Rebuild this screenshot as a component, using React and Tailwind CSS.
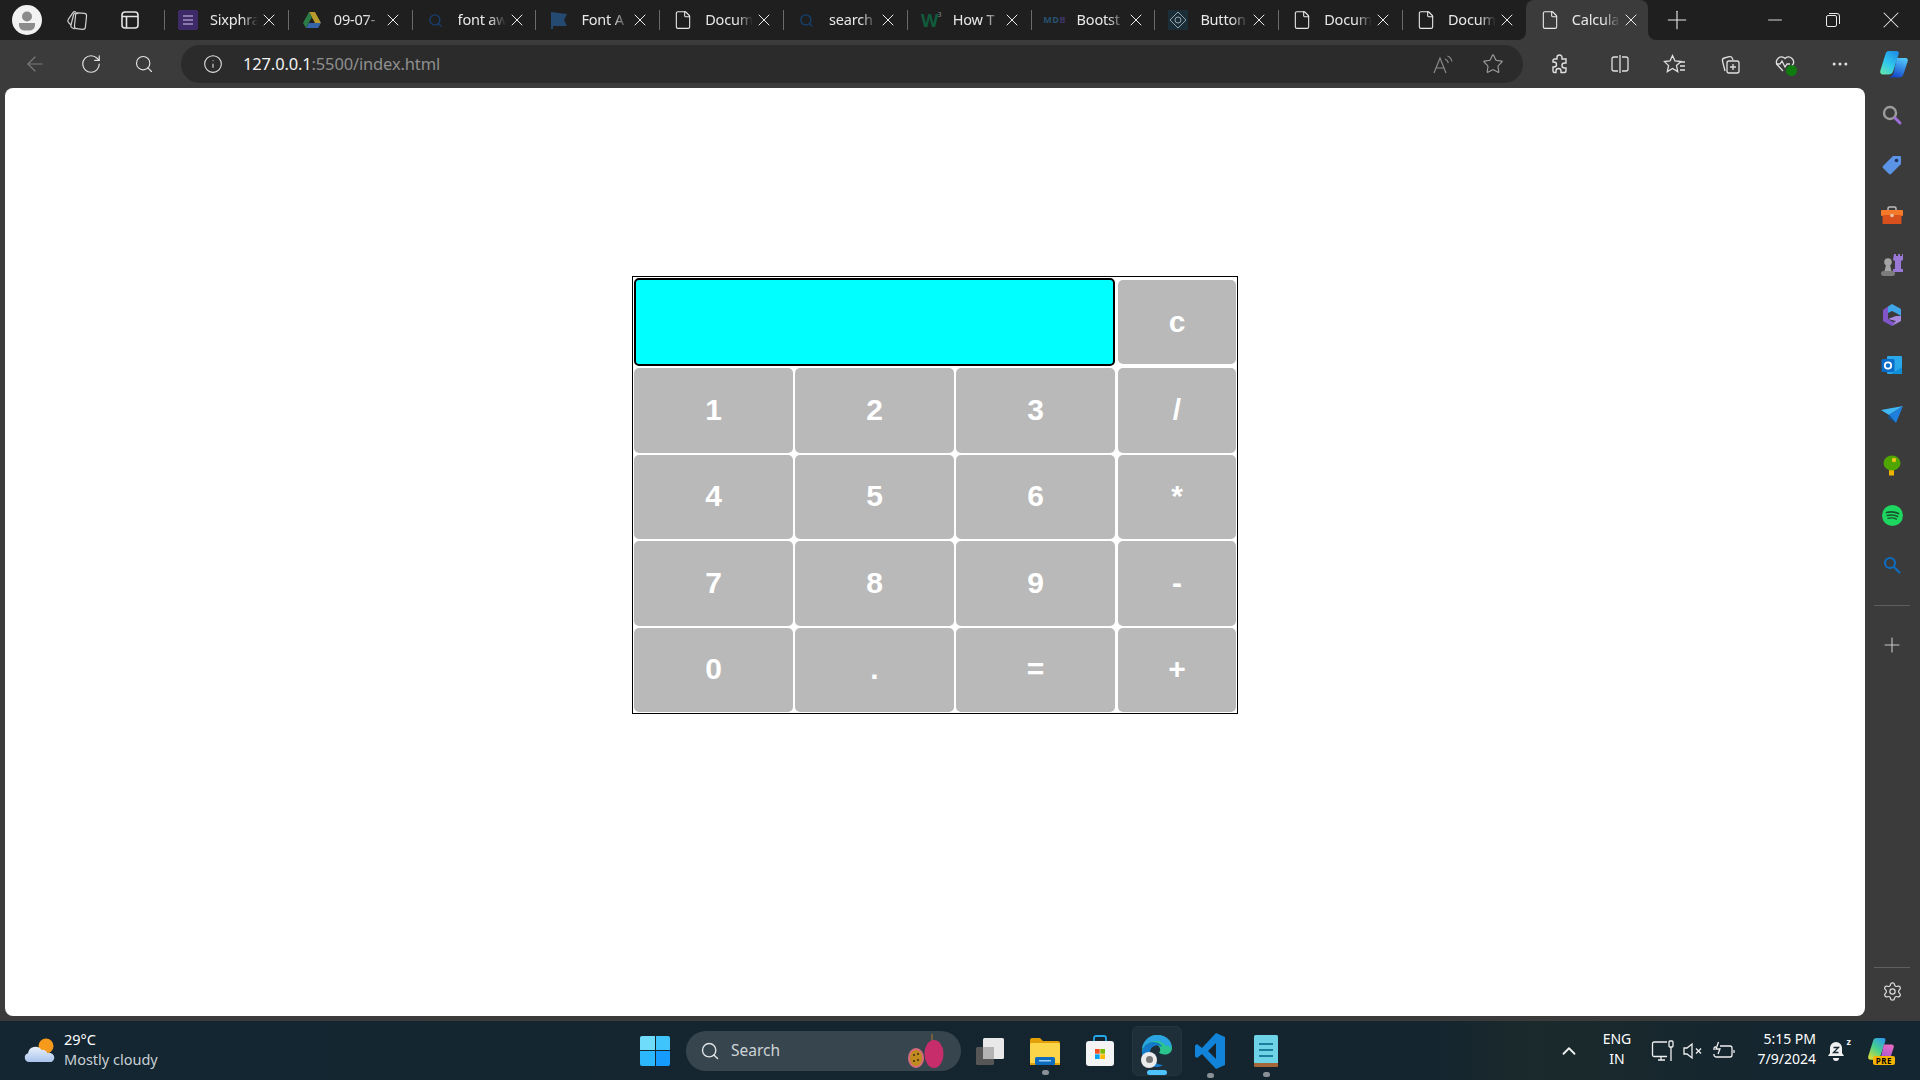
import React from "react";
import {
  ArrowLeft,
  ChevronUp,
  File,
  Info,
  Minus,
  MoreHorizontal,
  Plus,
  RotateCw,
  Search,
  Settings,
  Star,
  X,
} from "lucide-react";

const uiFont = { fontFamily: '"Noto Sans", "Open Sans", sans-serif' };

/* ---------- small drawn icons ---------- */

const Avatar = () => (
  <svg width="32" height="32" viewBox="0 0 32 32">
    <circle cx="16" cy="16" r="15" fill="#f2f2f2" />
    <circle cx="16" cy="12.5" r="5" fill="#8b8b8b" />
    <path d="M8 19h16v2.5a6 6 0 0 1-6 5h-4a6 6 0 0 1-6-5z" fill="#8b8b8b" />
  </svg>
);

const Workspaces = () => (
  <svg width="24" height="24" viewBox="0 0 24 24" fill="none" stroke="#cfcfcf" strokeWidth="1.2">
    <rect x="10" y="5" width="11" height="16" rx="2.5" transform="rotate(6 15 13)" />
    <path d="M10 21 7.500 20a2.500 2.500 0 0 1-1.500-3l2.500-10a2.500 2.500 0 0 1 3-1.800l2 .5" />
    <path d="M6 17 3.500 14.500a2.500 2.500 0 0 1-.2-3.200l4.500-6.500a2.500 2.500 0 0 1 3.200-.8" />
  </svg>
);

const VerticalTabs = () => (
  <svg width="20" height="20" viewBox="0 0 20 20" fill="none" stroke="#e4e4e4" strokeWidth="1.6">
    <rect x="2" y="2" width="16" height="16" rx="3" />
    <path d="M2 6.500h16M6.500 6.500V18" />
  </svg>
);

const FormsIcon = () => (
  <span className="flex h-5 w-5 flex-col items-center justify-center gap-[2px] rounded-[2px] bg-[#3f2a68]">
    <span className="h-[2px] w-[10px] bg-[#8a78ac]" />
    <span className="h-[2px] w-[10px] bg-[#8a78ac]" />
    <span className="h-[2px] w-[10px] bg-[#8a78ac]" />
  </span>
);

const DriveIcon = () => (
  <svg width="20" height="20" viewBox="0 0 20 20">
    <path d="M7 2h6l6 11h-6z" fill="#b99a2c" />
    <path d="M7 2 1 13l3 5 6-11z" fill="#2c7a46" />
    <path d="M4 18h12l3-5H7z" fill="#3565a8" />
  </svg>
);

const SearchFav = () => <Search size={15} strokeWidth={2.2} color="#17406e" />;

const FlagIcon = () => (
  <svg width="18" height="20" viewBox="0 0 18 20">
    <path d="M1 2l16 2-3 6 3 6H3v3H1z" fill="#254a72" />
  </svg>
);

const W3Icon = () => (
  <span className="flex items-start text-[18px] leading-none font-bold tracking-[-1px] text-[#0f5c3c]">
    W<span className="text-[7px] font-normal text-[#8a8a8a]">3</span>
  </span>
);

const MdbIcon = () => (
  <span className="text-[9px] font-bold tracking-[0.5px] text-[#27526e]">
    MD<span className="text-[#3e3668]">B</span>
  </span>
);

const DuIcon = () => (
  <span className="flex h-5 w-5 items-center justify-center bg-[#1b2d36]">
    <svg width="20" height="20" viewBox="0 0 20 20" fill="none" stroke="#9fb0b8" strokeWidth="0.9">
      <path d="M10 2 18 10 10 18 2 10z" />
      <circle cx="10" cy="10" r="3" />
    </svg>
  </span>
);

const PageIcon = () => <File size={20} strokeWidth={1.3} color="#eaeaea" />;

const ReadAloud = () => (
  <svg width="22" height="22" viewBox="0 0 22 22" fill="none" stroke="#8a8a8a" strokeWidth="1.2">
    <path d="M2 20 8 5l6 15M4.500 15h7" />
    <path d="M13 6c2 .8 3 2.200 3.400 4M15.500 3c2.600 1 4 3 4.400 5.500" />
  </svg>
);

const Extensions = () => (
  <svg width="22" height="22" viewBox="0 0 22 22" fill="none" stroke="#e0e0e0" strokeWidth="1.4">
    <path d="M8 4.500a2.500 2.500 0 0 1 5 0V6h4v4h-1.500a2.500 2.500 0 0 0 0 5H17v3a1.500 1.500 0 0 1-1.500 1.500H12V18a2.500 2.500 0 0 0-5 0v1.500H5.500A1.500 1.500 0 0 1 4 18v-4h1a2.500 2.500 0 0 0 0-5H4V7.500A1.500 1.500 0 0 1 5.500 6H8z" />
  </svg>
);

const SplitScreen = () => (
  <svg width="22" height="22" viewBox="0 0 22 22" fill="none" stroke="#e0e0e0" strokeWidth="1.3">
    <path d="M9 4H5a2 2 0 0 0-2 2v10a2 2 0 0 0 2 2h4M13 4h4a2 2 0 0 1 2 2v10a2 2 0 0 1-2 2h-4M11 2v18" />
  </svg>
);

const Favorites = () => (
  <svg width="24" height="22" viewBox="0 0 24 22" fill="none" stroke="#e0e0e0" strokeWidth="1.3">
    <path d="M9.500 2.500 12 8l6 .6-4.500 4 1.300 6L9.500 15.500 4.300 18.600l1.300-6L1.500 8.600 7 8z" />
    <path d="M17 9h5M17 13h5M17 17h5" />
  </svg>
);

const Collections = () => (
  <svg width="24" height="24" viewBox="0 0 24 24" fill="none" stroke="#e0e0e0" strokeWidth="1.3">
    <path d="M7 19 4.500 9a2.500 2.500 0 0 1 1.800-3l5-1.300a2.500 2.500 0 0 1 3 1.600L15 8" />
    <rect x="9" y="9" width="12" height="12" rx="2" />
    <path d="M15 12v6M12 15h6" />
  </svg>
);

const HeartPulse = () => (
  <span className="relative flex h-6 w-6 items-center justify-center">
    <svg width="22" height="22" viewBox="0 0 22 22" fill="none" stroke="#e0e0e0" strokeWidth="1.3">
      <path d="M9 18 3.500 12a5 5 0 0 1 7-7l.5.500.5-.500a5 5 0 0 1 7 7l-1 1" />
      <path d="M2 11h4l2-3 3 6 2-3h3" />
    </svg>
    <span className="absolute right-0 bottom-0 h-[11px] w-[11px] rounded-full bg-[#107c10]" />
  </span>
);

const CopilotIcon = ({ size = 30 }) => (
  <svg width={size} height={size} viewBox="0 0 30 30">
    <defs>
      <linearGradient id="copA" x1="0.800" y1="0" x2="0.200" y2="1">
        <stop offset="0" stopColor="#1f8fe8" />
        <stop offset="0.550" stopColor="#30c8ee" />
        <stop offset="1" stopColor="#5fe3b0" />
      </linearGradient>
      <linearGradient id="copB" x1="0.700" y1="0" x2="0.300" y2="1">
        <stop offset="0" stopColor="#52c6fa" />
        <stop offset="1" stopColor="#1243c8" />
      </linearGradient>
    </defs>
    <path d="M10 2h7.500c2 0 2.800 1.500 2.200 3.200L14 22.500c-.7 2-2.300 3-4.500 3H4c-2.300 0-3.300-1.800-2.700-3.700L6.500 5c.6-2 1.700-3 3.500-3z" fill="url(#copA)" />
    <path d="M18 9h8.500c2 0 2.700 1.500 2.200 3.200l-4.300 13.300c-.7 2-2 3-4.200 3H8.500c2.800 0 5-1.200 6-4z" fill="url(#copB)" />
  </svg>
);

// taskbar copilot: same shape, preview colours
const CopilotPre = () => (
  <svg width="28" height="26" viewBox="0 0 30 28">
    <defs>
      <linearGradient id="preA" x1="0.800" y1="0" x2="0.200" y2="1">
        <stop offset="0" stopColor="#2f9be8" />
        <stop offset="0.500" stopColor="#46d08c" />
        <stop offset="1" stopColor="#d8dc3c" />
      </linearGradient>
      <linearGradient id="preB" x1="0.700" y1="0" x2="0.300" y2="1">
        <stop offset="0" stopColor="#e86ac0" />
        <stop offset="1" stopColor="#8a4fd8" />
      </linearGradient>
    </defs>
    <path d="M10 1h7.500c2 0 2.800 1.500 2.200 3.200L14 21.500c-.7 2-2.300 3-4.500 3H4c-2.300 0-3.300-1.800-2.700-3.700L6.500 4c.6-2 1.700-3 3.500-3z" fill="url(#preA)" />
    <path d="M18 8h8.500c2 0 2.700 1.500 2.200 3.200l-4.300 13.300c-.7 2-2 3-4.200 3H8.500c2.800 0 5-1.200 6-4z" fill="url(#preB)" />
  </svg>
);

const Tag = () => (
  <svg width="22" height="22" viewBox="0 0 22 22">
    <path d="M12 2h7a1 1 0 0 1 1 1v7L10 20a1.500 1.500 0 0 1-2 0L2 14a1.500 1.500 0 0 1 0-2z" fill="#5b93e6" />
    <circle cx="15.500" cy="6.500" r="1.800" fill="#20325a" />
  </svg>
);

const Toolbox = () => (
  <svg width="22" height="20" viewBox="0 0 22 20">
    <path d="M7 6V3.500A1.500 1.500 0 0 1 8.500 2h5A1.500 1.500 0 0 1 15 3.500V6" fill="none" stroke="#bdbdbd" strokeWidth="1.500" />
    <rect x="0" y="5" width="22" height="6" rx="1" fill="#f47a2a" />
    <rect x="1.500" y="10" width="19" height="9" rx="1" fill="#d8501c" />
    <circle cx="11" cy="10.500" r="1.800" fill="#e6c3a8" />
  </svg>
);

const Chess = () => (
  <svg width="24" height="24" viewBox="0 0 24 24">
    <path d="M14 1h2v2h2V1h2v2h2V1h1v6l-2 1v8h2v3H13v-3h2V8l-2-1z" fill="#9a78d6" />
    <circle cx="8" cy="9" r="3.800" fill="#a3a3a3" />
    <path d="M6 12h4l1.500 6h-7z" fill="#a3a3a3" />
    <rect x="1" y="18" width="14" height="5" rx="2.500" fill="#7c7c7c" />
  </svg>
);

const M365 = () => (
  <svg width="22" height="24" viewBox="0 0 22 24">
    <path d="M11 1 20 6v7l-5-3-4-2-4 2V3.500z" fill="#3fa5e6" />
    <path d="M2 7 7 3.500V16l5 3 3-1-4 5-9-5z" fill="#7f55c9" />
    <path d="M20 13v5l-9 5 4-5-8-2 8-3z" fill="#a98ae0" />
  </svg>
);

const Outlook = () => (
  <svg width="22" height="22" viewBox="0 0 22 22">
    <rect x="6" y="2" width="15" height="18" rx="1" fill="#28a8ea" />
    <rect x="0.500" y="5" width="13" height="13" rx="1.500" fill="#0a6cc9" />
    <circle cx="7" cy="11.500" r="3.200" fill="none" stroke="#fff" strokeWidth="1.800" />
    <path d="M10 20 21 13v7z" fill="#0f8fd8" />
  </svg>
);

const Send = () => (
  <svg width="22" height="18" viewBox="0 0 22 18">
    <path d="M0 4 22 0 8 9z" fill="#3fb9f5" />
    <path d="M22 0 15 17 8 9z" fill="#1f7fdc" />
    <path d="M8 9 15 17l-8-5z" fill="#14508e" />
  </svg>
);

const Tree = () => (
  <svg width="18" height="22" viewBox="0 0 18 22">
    <rect x="6" y="15" width="5" height="6.500" fill="#f2b200" />
    <ellipse cx="9" cy="9" rx="8.500" ry="7.500" fill="#4fa600" />
    <circle cx="11" cy="6" r="2.200" fill="#f0c419" />
  </svg>
);

const Spotify = () => (
  <svg width="21" height="21" viewBox="0 0 21 21" fill="none" stroke="#17532d" strokeLinecap="round">
    <circle cx="10.500" cy="10.500" r="10.500" fill="#1ed760" stroke="none" />
    <path d="M4.500 7.500c4-1 8.500-.8 12 1" strokeWidth="1.800" />
    <path d="M5.200 10.500c3.500-.8 7.500-.6 10.500 1" strokeWidth="1.500" />
    <path d="M6 13.300c3-.6 6-.5 8.500.8" strokeWidth="1.300" />
  </svg>
);

const SearchColor = () => (
  <svg width="22" height="22" viewBox="0 0 22 22" fill="none" strokeWidth="2.400" strokeLinecap="round">
    <circle cx="9" cy="9" r="6" stroke="#9c9c9c" />
    <path d="M14 14l5 5" stroke="#9d6ed8" strokeWidth="3" />
  </svg>
);

const SearchBlue = () => (
  <svg width="18" height="18" viewBox="0 0 18 18" fill="none" stroke="#0f6cbd" strokeWidth="2.200" strokeLinecap="round">
    <circle cx="7" cy="7" r="5" />
    <path d="M11 11l5.500 5.500" />
  </svg>
);

const Weather = () => (
  <svg width="32" height="28" viewBox="0 0 32 28">
    <defs>
      <linearGradient id="cloud" x1="0" y1="0" x2="0" y2="1">
        <stop offset="0" stopColor="#e8f0fb" />
        <stop offset="1" stopColor="#a9c4ec" />
      </linearGradient>
    </defs>
    <circle cx="22" cy="9" r="7.500" fill="#f59a1b" />
    <path d="M5 25a4.500 4.500 0 0 1-1-8.800A7.500 7.500 0 0 1 17.500 13a5 5 0 0 1 6 3.300 4.500 4.500 0 0 1 4 8.700z" fill="url(#cloud)" />
  </svg>
);

const StartIcon = () => (
  <div className="grid h-[30px] w-[30px] grid-cols-2 grid-rows-2 gap-[1px]">
    <span className="rounded-tl-[2px] bg-[#6fdcfb]" />
    <span className="rounded-tr-[2px] bg-[#3fc4fb]" />
    <span className="rounded-bl-[2px] bg-[#2cb6fb]" />
    <span className="rounded-br-[2px] bg-[#149bfb]" />
  </div>
);

const Fruit = () => (
  <svg width="38" height="36" viewBox="0 0 38 36">
    <path d="M25 1v8" stroke="#8a6a38" strokeWidth="1.500" />
    <ellipse cx="27" cy="21" rx="9.500" ry="14" fill="#c72c6b" />
    <ellipse cx="9" cy="25" rx="8" ry="10" fill="#d76b7e" />
    <ellipse cx="9" cy="25" rx="6" ry="8" fill="#c08a1e" />
    <circle cx="7" cy="22" r="1" fill="#3c2a10" />
    <circle cx="11" cy="27" r="1" fill="#3c2a10" />
    <circle cx="11" cy="21" r="1" fill="#3c2a10" />
    <circle cx="7" cy="28" r="1" fill="#3c2a10" />
  </svg>
);

const TaskView = () => (
  <svg width="30" height="30" viewBox="0 0 30 30">
    <rect x="1" y="11" width="18" height="18" rx="1.500" fill="#565656" />
    <rect x="8" y="2" width="21" height="21" rx="1.500" fill="#e8e8e8" />
    <rect x="8" y="11" width="11" height="12" fill="#b3b3b3" />
  </svg>
);

const Explorer = () => (
  <svg width="30" height="28" viewBox="0 0 30 28">
    <path d="M0 3a2 2 0 0 1 2-2h8l3 3h15a2 2 0 0 1 2 2v4H0z" fill="#e3a008" />
    <rect x="0" y="6" width="30" height="22" rx="1.500" fill="#fcd54a" />
    <path d="M0 26h30v2H0z" fill="#e3a008" />
    <rect x="5" y="20" width="20" height="8" rx="1.500" fill="#0f6cbd" />
    <rect x="9" y="23" width="12" height="1.500" fill="#9ad0f5" />
  </svg>
);

const StoreIcon = () => (
  <svg width="28" height="31" viewBox="0 0 28 31">
    <path d="M8 6V3a2 2 0 0 1 2-2h8a2 2 0 0 1 2 2v3" fill="none" stroke="#23a8ea" strokeWidth="1.800" />
    <rect x="0" y="6" width="28" height="25" rx="3" fill="#f4f4f4" />
    <rect x="9" y="14" width="4.700" height="4.700" fill="#f25022" />
    <rect x="14.300" y="14" width="4.700" height="4.700" fill="#7fba00" />
    <rect x="9" y="19.300" width="4.700" height="4.700" fill="#00a4ef" />
    <rect x="14.300" y="19.300" width="4.700" height="4.700" fill="#ffb900" />
  </svg>
);

const EdgeIcon = () => (
  <span className="relative flex h-[34px] w-[32px]">
    <svg width="32" height="34" viewBox="0 0 32 34">
      <path d="M16 1c9 0 15 6 15 13 0 4-3 6.500-7 6.500-3 0-5-1-6-2 1-1 1.500-2 1-4-1-4-6-6-10-4.500C5 12 2 16 1 19 1 9 7 1 16 1z" fill="#2bc48f" />
      <path d="M1 19c0-6 5-11 11-11 6 0 9 3 9 5-4-3-12-2-12 6 0 6 6 12 13 12-2 1.500-4 2-7 2C8 33 1 27 1 19z" fill="#1479c9" />
      <path d="M16 1C7 1 1 9 1 15c3-5 8-8 13-8 5 0 9 2 11 5 2-1 5 .5 5 3 2-7-4-14-14-14z" fill="#2aa4e2" />
    </svg>
    <span className="absolute bottom-0 left-0 flex h-4 w-4 items-center justify-center rounded-full bg-[#ececec]">
      <span className="h-[7px] w-[7px] rounded-full bg-[#777]" />
    </span>
  </span>
);

const VsCode = () => (
  <svg width="30" height="36" viewBox="0 0 30 36">
    <path d="M21 0 30 4v28l-9 4L7 21l-5 4-2-1.500V12.500L2 11l5 4zM21 10l-8 8 8 8z" fill="#1183d8" />
  </svg>
);

const Notepad = () => (
  <svg width="24" height="34" viewBox="0 0 24 34">
    <rect x="0" y="1" width="24" height="29" rx="1.500" fill="#6fd3e8" />
    <path d="M0 29h24v3a1 1 0 0 1-1 1H1a1 1 0 0 1-1-1z" fill="#a5673a" />
    <path d="M5 10h14M5 16h14M5 22h14" stroke="#1a7f9c" strokeWidth="2" />
  </svg>
);

const MonitorIcon = () => (
  <svg width="24" height="24" viewBox="0 0 24 24" fill="none" stroke="#f0f0f0" strokeWidth="1.300">
    <path d="M16 3H3a1.500 1.500 0 0 0-1.500 1.500V16A1.500 1.500 0 0 0 3 17.500h13M7 21h7M10 18v3" />
    <rect x="18" y="2" width="4" height="6" rx="1" />
    <path d="M20 8v14" />
  </svg>
);

const MuteIcon = () => (
  <svg width="22" height="20" viewBox="0 0 22 20" fill="none" stroke="#f0f0f0" strokeWidth="1.300">
    <path d="M2 7h3l5-4v14l-5-4H2z" />
    <path d="M14 7.500l5 5M19 7.500l-5 5" />
  </svg>
);

const BatteryIcon = () => (
  <svg width="24" height="20" viewBox="0 0 24 20" fill="none" stroke="#f0f0f0" strokeWidth="1.300">
    <path d="M8 5h10a2 2 0 0 1 2 2v7a2 2 0 0 1-2 2H4a2 2 0 0 1-2-2v-1M2 9V7a2 2 0 0 1 2-1" />
    <path d="M22 9v3" />
    <path d="M6.500 1 4 8h4l-2 5" />
  </svg>
);

const BellZ = () => (
  <span className="relative flex h-6 w-6 items-center justify-center">
    <svg width="20" height="22" viewBox="0 0 20 22">
      <path d="M10 2a6 6 0 0 1 6 6v5l2 3H2l2-3V8a6 6 0 0 1 6-6z" fill="#f0f0f0" />
      <path d="M7 18h6a3 3 0 0 1-6 0z" fill="#f0f0f0" />
      <path d="M7.500 7.500h5l-5 5h5" fill="none" stroke="#15262f" strokeWidth="1.300" />
    </svg>
    <span className="absolute top-[-2px] right-[-3px] text-[9px] leading-none font-bold text-[#f0f0f0]">z</span>
  </span>
);

/* ---------- browser chrome ---------- */

// only the part of each title the narrow tab leaves visible
const tabs = [
  { title: "Sixphra", icon: <FormsIcon /> },
  { title: "09-07-", icon: <DriveIcon /> },
  { title: "font aw", icon: <SearchFav /> },
  { title: "Font A", icon: <FlagIcon /> },
  { title: "Docum", icon: <PageIcon /> },
  { title: "search", icon: <SearchFav /> },
  { title: "How T", icon: <W3Icon /> },
  { title: "Bootst", icon: <MdbIcon /> },
  { title: "Button", icon: <DuIcon /> },
  { title: "Docum", icon: <PageIcon /> },
  { title: "Docum", icon: <PageIcon /> },
];

const Tab = ({ title, icon, active }) => (
  <div className={`relative flex h-10 shrink-0 items-center ${active ? "w-[122px] rounded-t-lg bg-[#3b3b3b]" : "w-[123.8px]"}`}>
    {!active && <span className="h-5 w-px bg-[#6a6a6a]" />}
    <span className={`flex w-5 justify-center ${active ? "ml-[14px]" : "ml-[13px]"}`}>{icon}</span>
    <span className="ml-[12px] w-[51px] pb-px text-[14.5px] tracking-[-0.2px] whitespace-nowrap text-[#e8e8e8] [mask-image:linear-gradient(to_right,black_62%,transparent_94%)]">
      {title}
    </span>
    <X size={20} strokeWidth={1.2} color="#ececec" className="-ml-[2px]" />
    {active && (
      <>
        <span className="absolute bottom-0 left-[-8px] h-2 w-2 bg-[#3b3b3b]">
          <span className="block h-2 w-2 rounded-br-lg bg-[#1f1f1f]" />
        </span>
        <span className="absolute right-[-8px] bottom-0 h-2 w-2 bg-[#3b3b3b]">
          <span className="block h-2 w-2 rounded-bl-lg bg-[#1f1f1f]" />
        </span>
      </>
    )}
  </div>
);

const Slot = ({ w, children }) => (
  <div className={`flex shrink-0 items-center justify-center ${w}`}>{children}</div>
);

const TabBar = () => (
  <div className="flex h-10 items-center bg-[#1f1f1f]">
    <Slot w="w-[54px]"><Avatar /></Slot>
    <Slot w="w-[46px]"><Workspaces /></Slot>
    <Slot w="w-[60px]"><VerticalTabs /></Slot>
    <div className="w-1 shrink-0" />
    {tabs.map((tab, i) => (
      <Tab key={i} title={tab.title} icon={tab.icon} />
    ))}
    <Tab title="Calcula" icon={<PageIcon />} active />
    <Slot w="w-[58px]"><Plus size={30} strokeWidth={0.9} color="#e8e8e8" /></Slot>
    <div className="flex-1" />
    <Slot w="w-[58px]"><Minus size={22} strokeWidth={1} color="#e8e8e8" /></Slot>
    <Slot w="w-[58px]">
      <svg width="14" height="14" viewBox="0 0 14 14" fill="none" stroke="#e8e8e8">
        <rect x="0.500" y="2.500" width="10" height="11" rx="1.500" />
        <path d="M3 .5h8a2.500 2.500 0 0 1 2.500 2.500v8" />
      </svg>
    </Slot>
    <Slot w="w-[58px]"><X size={28} strokeWidth={0.9} color="#e8e8e8" /></Slot>
  </div>
);

const AddressBar = () => (
  <div className="flex h-[38px] w-[1342px] shrink-0 items-center rounded-[19px] bg-[#2b2b2b]">
    <Slot w="ml-[2px] w-[60px]"><Info size={20} strokeWidth={1.3} color="#e4e4e4" /></Slot>
    <span className="text-[16.5px] tracking-[-0.15px] text-[#8f8f8f]">
      <span className="text-[#f2f2f2]">127.0.0.1</span>:5500/index.html
    </span>
    <div className="flex-1" />
    <Slot w="w-[50px]"><ReadAloud /></Slot>
    <Slot w="w-[50px]"><Star size={22} strokeWidth={1.2} color="#a0a0a0" /></Slot>
    <div className="w-[5px] shrink-0" />
  </div>
);

const Toolbar = () => (
  <div className="flex h-12 items-center bg-[#3b3b3b]">
    <Slot w="ml-[4px] w-[62px]"><ArrowLeft size={24} strokeWidth={1.1} color="#7d7d7d" /></Slot>
    <Slot w="w-[50px]"><RotateCw size={22} strokeWidth={1.3} color="#e4e4e4" /></Slot>
    <Slot w="w-[56px]"><Search size={20} strokeWidth={1.4} color="#e4e4e4" /></Slot>
    <div className="w-[9px] shrink-0" />
    <AddressBar />
    <Slot w="w-[73px]"><Extensions /></Slot>
    <span className="h-6 w-px bg-[#5d5d5d]" />
    <Slot w="-ml-[4px] w-[55px]"><SplitScreen /></Slot>
    <Slot w="w-[55px]"><Favorites /></Slot>
    <Slot w="w-[55px]"><Collections /></Slot>
    <Slot w="w-[55px]"><HeartPulse /></Slot>
    <Slot w="w-[55px]"><MoreHorizontal size={20} strokeWidth={1.6} color="#e4e4e4" /></Slot>
    <Slot w="w-[54px]"><CopilotIcon /></Slot>
  </div>
);

const sidebarIcons = [
  <SearchColor />,
  <Tag />,
  <Toolbox />,
  <Chess />,
  <M365 />,
  <Outlook />,
  <Send />,
  <Tree />,
  <Spotify />,
  <SearchBlue />,
];

const Sidebar = () => (
  <div className="flex w-[55px] shrink-0 flex-col items-center bg-[#3b3b3b] pt-[2px] pr-px">
    {sidebarIcons.map((icon, i) => (
      <div key={i} className="flex h-[50px] w-full items-center justify-center">{icon}</div>
    ))}
    <span className="mt-[15px] h-px w-9 bg-[#5f5f5f]" />
    <div className="mt-[24px] flex h-[30px] items-center justify-center">
      <Plus size={24} strokeWidth={1.1} color="#c8c8c8" />
    </div>
    <div className="flex-1" />
    <span className="h-px w-9 bg-[#5f5f5f]" />
    <div className="mb-[7px] flex h-[46px] items-center justify-center">
      <Settings size={21} strokeWidth={1.4} color="#dcdcdc" />
    </div>
  </div>
);

/* ---------- calculator ---------- */

const keys = ["1", "2", "3", "/", "4", "5", "6", "*", "7", "8", "9", "-", "0", ".", "=", "+"];

const Calculator = () => (
  <div
    className="ml-[627px] mt-[188px] grid w-[606px] grid-cols-[159px_159px_159px_119px] grid-rows-[88px_repeat(4,84.5px)] gap-[2px] border border-black p-px"
    style={{ fontFamily: '"Liberation Sans", Arial, sans-serif' }}
  >
    <div className="col-span-3 rounded-[5px] border-2 border-black bg-[#00ffff]" />
    <button className="ml-px h-[84px] self-center rounded-[5px] bg-[#b9b9b9] pb-[2px] text-[30px] font-bold text-white">c</button>
    {keys.map((key, i) => (
      <button key={key} className={`rounded-[5px] bg-[#b9b9b9] pb-[2px] text-[30px] font-bold text-white ${i % 4 === 3 ? "ml-px" : ""}`}>
        {key}
      </button>
    ))}
  </div>
);

/* ---------- windows taskbar ---------- */

const Dot = ({ bottom }) => (
  <span className={`absolute h-[5px] w-[7px] rounded-full bg-[#8a9095] ${bottom}`} />
);

const Taskbar = () => (
  <div className="flex h-[59px] items-center bg-[linear-gradient(90deg,#142631_0%,#15252f_75%,#1b2a2b_80%,#15262f_90%,#142631_100%)] text-white" style={uiFont}>
    <Slot w="ml-[16px] w-[48px]"><Weather /></Slot>
    <div className="flex w-[570px] shrink-0 flex-col pb-[4px] text-[14.5px] leading-5">
      <span>29°C</span>
      <span className="text-[#c8d0d5]">Mostly cloudy</span>
    </div>
    <Slot w="w-[42px]"><StartIcon /></Slot>
    <div className="ml-[10px] flex h-10 w-[275px] shrink-0 items-center rounded-[20px] bg-[#37454f]">
      <Search size={20} strokeWidth={1.7} color="#e0e4e6" className="ml-[14px]" />
      <span className="ml-[11px] text-[15.5px] text-[#ced3d6]">Search</span>
      <div className="flex-1" />
      <span className="mr-[16px]"><Fruit /></span>
    </div>
    <Slot w="w-[58px]"><TaskView /></Slot>
    <div className="relative flex w-[52px] shrink-0 items-center justify-center">
      <Explorer />
      <Dot bottom="bottom-[-10px]" />
    </div>
    <Slot w="w-[58px]"><StoreIcon /></Slot>
    <div className="relative ml-[3px] flex h-[50px] w-[50px] shrink-0 items-center justify-center rounded-md border border-[#26333d] bg-[#1f2f3a]">
      <EdgeIcon />
      <span className="absolute bottom-0 h-[5px] w-5 rounded-full bg-[#4cc2ff]" />
    </div>
    <div className="relative ml-[3px] flex w-[50px] shrink-0 items-center justify-center">
      <VsCode />
      <Dot bottom="bottom-[-9px]" />
    </div>
    <div className="relative ml-[5px] flex w-[52px] shrink-0 items-center justify-center">
      <Notepad />
      <Dot bottom="bottom-[-9px]" />
    </div>
    <div className="flex-1" />
    <Slot w="w-[40px]"><ChevronUp size={22} strokeWidth={2} color="#f0f0f0" /></Slot>
    <div className="ml-[5px] flex w-[46px] shrink-0 flex-col items-center pb-[4px] text-[14px] leading-5">
      <span>ENG</span>
      <span>IN</span>
    </div>
    <Slot w="ml-[10px] w-[26px]"><MonitorIcon /></Slot>
    <Slot w="w-[34px]"><MuteIcon /></Slot>
    <Slot w="w-[28px]"><BatteryIcon /></Slot>
    <div className="ml-[2px] flex w-[76px] shrink-0 flex-col items-end pb-[4px] text-[14px] leading-5">
      <span>5:15 PM</span>
      <span>7/9/2024</span>
    </div>
    <Slot w="w-[40px]"><BellZ /></Slot>
    <div className="relative flex h-7 w-[50px] shrink-0 items-start justify-center">
      <CopilotPre />
      <span className="absolute right-[11px] bottom-0 rounded-[2px] bg-[#f4b400] px-[3px] text-[8px] leading-[9px] font-bold tracking-[0.5px] text-black">PRE</span>
    </div>
    <div className="w-[14px] shrink-0" />
  </div>
);

export default function App() {
  return (
    <div className="flex h-screen w-screen flex-col overflow-hidden bg-[#3b3b3b]" style={uiFont}>
      <TabBar />
      <Toolbar />
      <div className="flex h-[933px] min-h-0">
        <div className="flex flex-1 flex-col pb-[5px] pl-[5px]">
          <div className="flex-1 rounded-lg bg-white">
            <Calculator />
          </div>
        </div>
        <Sidebar />
      </div>
      <Taskbar />
    </div>
  );
}
